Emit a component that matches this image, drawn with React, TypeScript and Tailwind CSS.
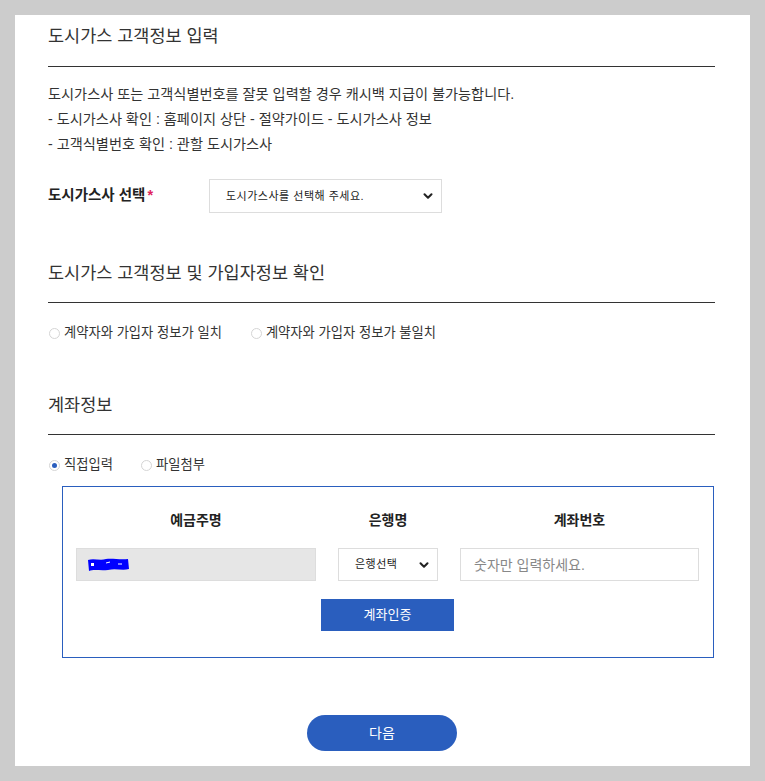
import { ChevronDown } from "lucide-react";

const font = { fontFamily: '"Liberation Sans", "Noto Sans CJK KR", sans-serif' };

function Radio({ checked, label }: { checked?: boolean; label: string }) {
  return (
    <label className="flex items-center gap-[4px] text-[13.3px] leading-[20px] text-[#333]">
      <span className="w-[11px] h-[11px] rounded-full border border-[#d5d5d5] bg-white flex items-center justify-center">
        {checked && <span className="w-[5px] h-[5px] rounded-full bg-[#2a5ebe]" />}
      </span>
      {label}
    </label>
  );
}

function SectionTitle({ children }: { children: string }) {
  return (
    <h2 className="text-[17.5px] leading-[26px] text-[#333] pb-[16px] border-b border-[#333]">
      {children}
    </h2>
  );
}

export default function App() {
  return (
    <div className="min-h-[781px] bg-[#cccccc] p-[15px]" style={font}>
      <div className="bg-white pl-[33px] pr-[35px] pt-[8px] pb-[15px]">
        {/* 고객정보 입력 */}
        <h1 className="text-[17.5px] leading-[26px] text-[#333] pb-[17px] border-b border-[#333]">
          도시가스 고객정보 입력
        </h1>
        <div className="mt-[15px] text-[14.2px] leading-[25px] text-[#333]">
          <p>도시가스사 또는 고객식별번호를 잘못 입력할 경우 캐시백 지급이 불가능합니다.</p>
          <p>- 도시가스사 확인 : 홈페이지 상단 - 절약가이드 - 도시가스사 정보</p>
          <p>- 고객식별번호 확인 : 관할 도시가스사</p>
        </div>

        <div className="mt-[22px] flex items-center">
          <span className="w-[161px] text-[14.5px] font-semibold text-[#222]">
            도시가스사 선택<span className="text-[#e0245e] ml-[2px]">*</span>
          </span>
          <div className="w-[233px] h-[34px] border border-[#ddd] flex items-center justify-between pl-[16px] pr-[6px] text-[11px] text-[#222]">
            <span className="tracking-[0.5px]">도시가스사를 선택해 주세요.</span>
            <ChevronDown size={14} strokeWidth={3.5} />
          </div>
        </div>

        {/* 가입자정보 확인 */}
        <div className="mt-[47px]">
          <SectionTitle>도시가스 고객정보 및 가입자정보 확인</SectionTitle>
        </div>
        <div className="mt-[20px] flex gap-[29px] pl-[1px]">
          <Radio label="계약자와 가입자 정보가 일치" />
          <Radio label="계약자와 가입자 정보가 불일치" />
        </div>

        {/* 계좌정보 */}
        <div className="mt-[49px]">
          <SectionTitle>계좌정보</SectionTitle>
        </div>
        <div className="mt-[20px] flex gap-[28px] pl-[1px]">
          <Radio checked label="직접입력" />
          <Radio label="파일첨부" />
        </div>

        <div className="mt-[11px] ml-[14px] mr-[1px] border border-[#2a5ebe] pt-[23px] pb-[26px] pl-[13px] pr-[15px]">
          <div className="grid grid-cols-[240px_100px_239px] gap-x-[22px] text-[14px] leading-[20px] font-semibold text-[#222] text-center">
            <span>예금주명</span>
            <span>은행명</span>
            <span>계좌번호</span>
          </div>
          <div className="mt-[18px] grid grid-cols-[240px_100px_239px] gap-x-[22px]">
            <div className="h-[33px] bg-[#e6e6e6] border border-[#ddd] pl-[9px] flex items-center">
              <svg width="44" height="16" viewBox="0 0 44 16">
                <path
                  d="M2 3 C8 1 14 4 20 2 C26 1 34 3 42 2 L43 12 C36 14 30 11 22 13 C14 14 8 12 3 14 Z"
                  fill="#0000ff"
                />
                <path d="M5 6 L8 6 L8 9 L5 9 Z" fill="#fff" />
                <path d="M20 6 L24 5" stroke="#fff" strokeWidth="1" />
                <path d="M32 7 L36 7" stroke="#fff" strokeWidth="1" />
              </svg>
            </div>
            <div className="h-[33px] border border-[#ddd] flex items-center justify-between pl-[16px] pr-[6px] text-[11px] text-[#222]">
              <span className="tracking-[0.5px]">은행선택</span>
              <ChevronDown size={14} strokeWidth={3.5} />
            </div>
            <input
              className="h-[33px] border border-[#ddd] px-[13px] text-[14px] text-[#333] placeholder:text-[#888] outline-none"
              placeholder="숫자만 입력하세요."
            />
          </div>
          <div className="mt-[18px] flex justify-center">
            <button className="w-[133px] h-[32px] bg-[#2a5ebe] text-white text-[13px] ml-[1px]">
              계좌인증
            </button>
          </div>
        </div>

        <div className="mt-[57px] flex justify-center">
          <button className="w-[150px] h-[36px] rounded-full bg-[#2a5ebe] text-white text-[14px] ml-[1px]">
            다음
          </button>
        </div>
      </div>
    </div>
  );
}
